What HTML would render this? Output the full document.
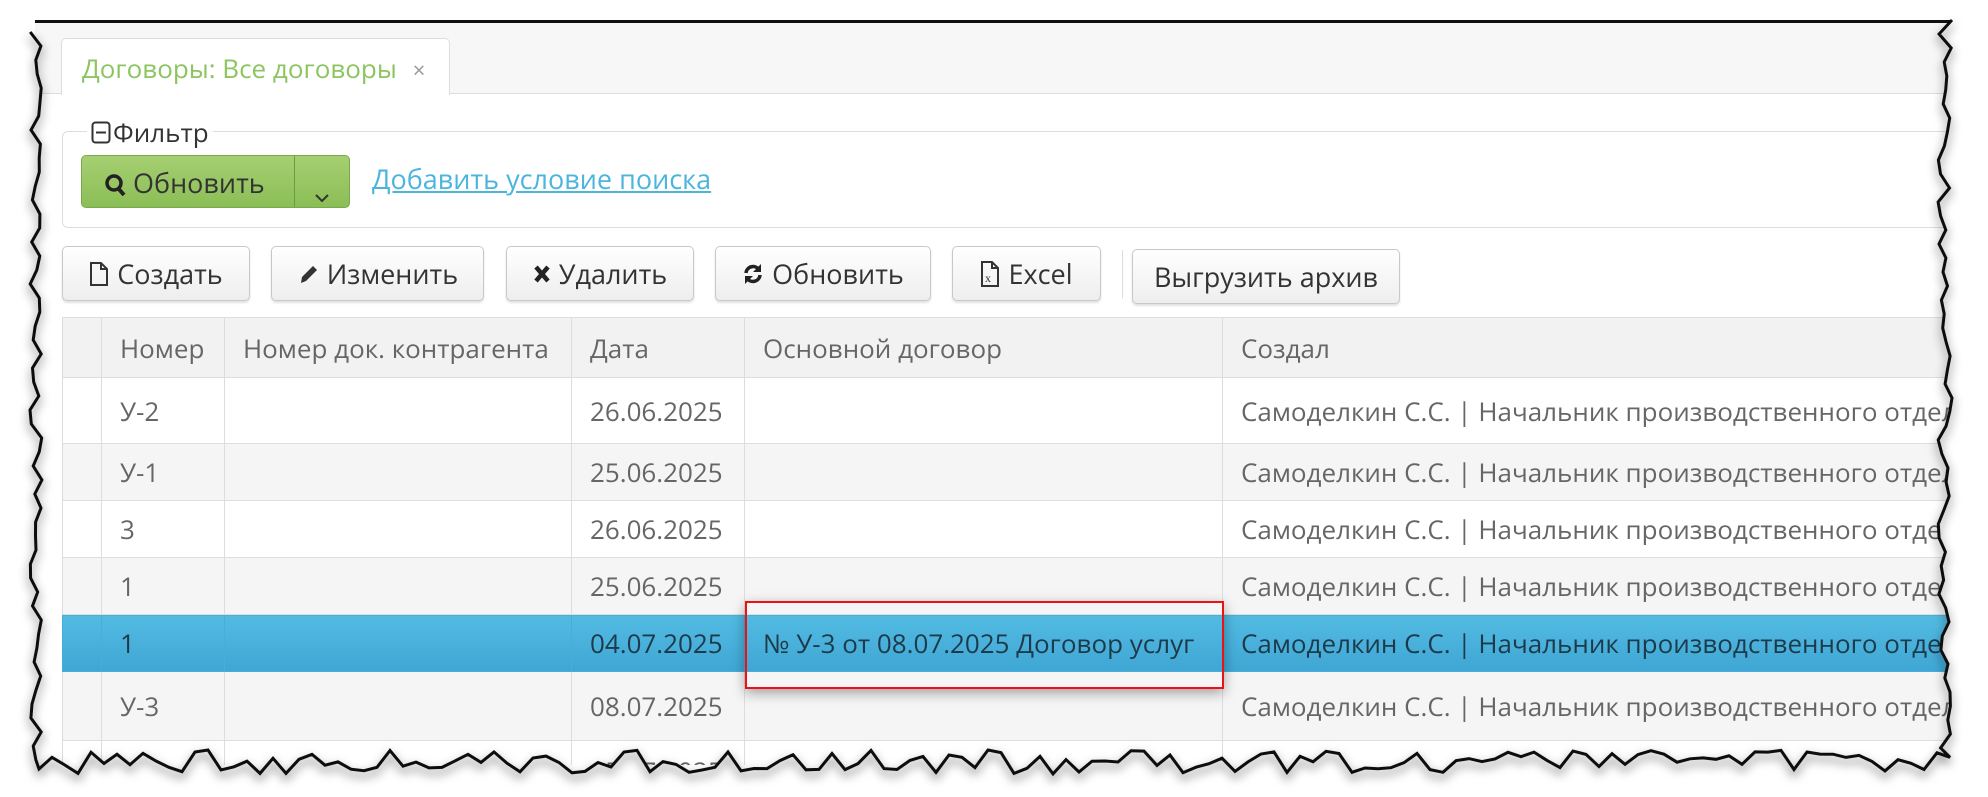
<!DOCTYPE html>
<html><head><meta charset="utf-8"><style>
*{box-sizing:border-box;margin:0;padding:0}
body{width:1988px;height:797px;background:#fff;position:relative;overflow:hidden;font-family:"Open Sans","Liberation Sans","DejaVu Sans",sans-serif;color:#555}
.paper{position:absolute;left:35px;top:20px;width:1920px;height:745px;background:#fff;overflow:hidden;border-top:3px solid #111}
.abs{position:absolute}
.tabbar{left:0;top:0;width:100%;height:71px;background:#f7f7f7;border-bottom:1px solid #ddd}
.tab{left:26px;top:15px;width:389px;height:57px;background:#fff;border:1px solid #ddd;border-bottom:none;border-radius:5px 5px 0 0;font-size:26px;color:#8cc560;padding:11px 0 0 20px;white-space:nowrap}
.tab span{color:#999;font-size:22px;margin-left:16px}
.fs{left:27px;top:108px;width:1950px;height:97px;border:1px solid #ddd;border-radius:6px}
.legend{left:52px;top:91px;background:#fff;padding:0 4px;font-size:26px;color:#333}
.gbtn{left:46px;top:132px;width:269px;height:53px;border:1px solid #7aa94a;border-radius:5px;background:linear-gradient(#a6cf72,#8bbe56);font-size:27px;color:#333}
.link{left:337px;top:137px;font-size:27px;color:#4bb5de;text-decoration:underline}
.btn{top:223px;height:55px;border:1px solid #c8c8c8;border-radius:5px;background:linear-gradient(#fff,#eee);box-shadow:0 2px 2px rgba(0,0,0,.12);font-size:27px;color:#333;display:flex;align-items:center;justify-content:center;gap:8px;white-space:nowrap}
table{position:absolute;left:27px;top:294px;border-collapse:collapse;font-size:26px;color:#666;table-layout:fixed;width:2000px}
td{border:1px solid #ddd;padding:0 0 0 18px;white-space:nowrap;overflow:hidden;vertical-align:middle}
tr.h td{background:#f2f2f2;height:60px}
tr.w td{background:#fff}
tr.g td{background:#f5f5f5}
tr.s td{background:linear-gradient(#52bbe2,#3fa6d4);color:#1d3a4a;border-color:#47addb}
.red{left:710px;top:578px;width:479px;height:88px;border:2px solid #e11;box-shadow:0 4px 12px rgba(0,0,0,.35)}
</style></head><body>
<div class="paper">
 <div class="abs tabbar"></div>
 <div class="abs tab">Договоры: Все договоры<span>×</span></div>
 <div class="abs fs"></div>
 <div class="abs legend"><svg width="22" height="24" style="vertical-align:-3px"><rect x="1.5" y="1.5" width="17" height="20" rx="3" fill="none" stroke="#333" stroke-width="2"/><line x1="5" y1="11.5" x2="15" y2="11.5" stroke="#333" stroke-width="2"/></svg>Фильтр</div>
 <div class="abs gbtn"><div class="abs" style="left:22px;top:8px"><svg width="22" height="24" style="vertical-align:-4px"><circle cx="10" cy="10" r="7" fill="none" stroke="#222" stroke-width="3.5"/><line x1="14" y1="15" x2="20" y2="22" stroke="#222" stroke-width="4"/></svg> Обновить</div><div class="abs" style="left:212px;top:0;width:1px;height:51px;background:#6f9a44"></div><div class="abs" style="left:232px;top:20px"><svg width="16" height="12"><path d="M2 2l6 6 6-6" fill="none" stroke="#333" stroke-width="2"/></svg></div></div>
 <div class="abs link">Добавить условие поиска</div>
 <div class="abs btn" style="left:27px;width:188px"><svg width="20" height="26"><path d="M2 2h10l6 6v16H2z M12 2v6h6" fill="none" stroke="#333" stroke-width="2"/></svg>Создать</div>
 <div class="abs btn" style="left:236px;width:213px"><svg width="22" height="24"><path d="M4 21l1-6L16 4l4 4L9 19z" fill="#333"/></svg>Изменить</div>
 <div class="abs btn" style="left:471px;width:188px"><svg width="18" height="20"><path d="M3 3l12 14M15 3L3 17" stroke="#222" stroke-width="4.5"/></svg>Удалить</div>
 <div class="abs btn" style="left:680px;width:216px"><svg width="22" height="24"><path d="M4 11a7 7 0 0 1 13-3M18 13a7 7 0 0 1-13 3" fill="none" stroke="#222" stroke-width="3.5"/><path d="M19 2v8h-8z M3 22v-8h8z" fill="#222"/></svg>Обновить</div>
 <div class="abs btn" style="left:917px;width:149px"><svg width="20" height="28"><path d="M2 2h10l6 6v18H2z M12 2v6h6" fill="none" stroke="#333" stroke-width="2"/><text x="5" y="22" font-size="12" font-family="Liberation Serif" fill="#333">x</text></svg>Excel</div>
 <div class="abs" style="left:1087px;top:227px;width:1px;height:48px;background:#ddd"></div>
 <div class="abs btn" style="left:1097px;top:226px;width:268px">Выгрузить архив</div>
 <table>
  <colgroup><col style="width:39px"><col style="width:123px"><col style="width:347px"><col style="width:173px"><col style="width:478px"><col style="width:840px"></colgroup>
  <tr class="h"><td></td><td>Номер</td><td>Номер док. контрагента</td><td>Дата</td><td>Основной договор</td><td>Создал</td></tr>
  <tr class="w" style="height:66px"><td></td><td>У-2</td><td></td><td>26.06.2025</td><td></td><td>Самоделкин С.С. | Начальник производственного отдела</td></tr>
  <tr class="g" style="height:57px"><td></td><td>У-1</td><td></td><td>25.06.2025</td><td></td><td>Самоделкин С.С. | Начальник производственного отдела</td></tr>
  <tr class="w" style="height:57px"><td></td><td>3</td><td></td><td>26.06.2025</td><td></td><td>Самоделкин С.С. | Начальник производственного отдела</td></tr>
  <tr class="g" style="height:57px"><td></td><td>1</td><td></td><td>25.06.2025</td><td></td><td>Самоделкин С.С. | Начальник производственного отдела</td></tr>
  <tr class="s" style="height:57px"><td></td><td>1</td><td></td><td>04.07.2025</td><td>№ У-3 от 08.07.2025 Договор услуг</td><td>Самоделкин С.С. | Начальник производственного отдела</td></tr>
  <tr class="g" style="height:69px"><td></td><td>У-3</td><td></td><td>08.07.2025</td><td></td><td>Самоделкин С.С. | Начальник производственного отдела</td></tr>
  <tr class="w" style="height:60px"><td></td><td></td><td></td><td>05.07.2025</td><td></td><td></td></tr>
 </table>
 <div class="abs red"></div>
</div>
<svg id="edge" class="abs" style="left:0;top:0" width="1988" height="797"></svg>
<script>
var s=document.getElementById('edge');
function j(i,a){return ((Math.sin(i*12.9898)*43758.5453)%1+1)%1*a;}
var p=[],i=0,x,y;
p.push([35,20]);
p.push([1953,20]);
for(y=20,i=0;y<760;y+=14,i++)p.push([1952-j(i,14),y]);
for(x=1950,i=0;x>35;x-=13,i++)p.push([x,750+j(i+50,24)]);
for(y=760,i=0;y>20;y-=14,i++)p.push([30+j(i+99,12),y]);
var d='M0 0H1988V797H0Z M'+p.map(function(q){return q[0].toFixed(1)+' '+q[1].toFixed(1)}).join(' L')+'Z';
var inner='M'+p.slice(2).map(function(q){return q[0].toFixed(1)+' '+q[1].toFixed(1)}).join(' L');
s.innerHTML='<defs><filter id="f" x="-5%" y="-5%" width="110%" height="110%"><feDropShadow dx="0" dy="5" stdDeviation="5" flood-color="#000" flood-opacity="0.6"/></filter></defs><path d="'+d+'" fill="#fff" fill-rule="evenodd"/><path d="'+inner+'" fill="none" stroke="#111" stroke-width="3" filter="url(#f)"/>';
</script>
</body></html>
